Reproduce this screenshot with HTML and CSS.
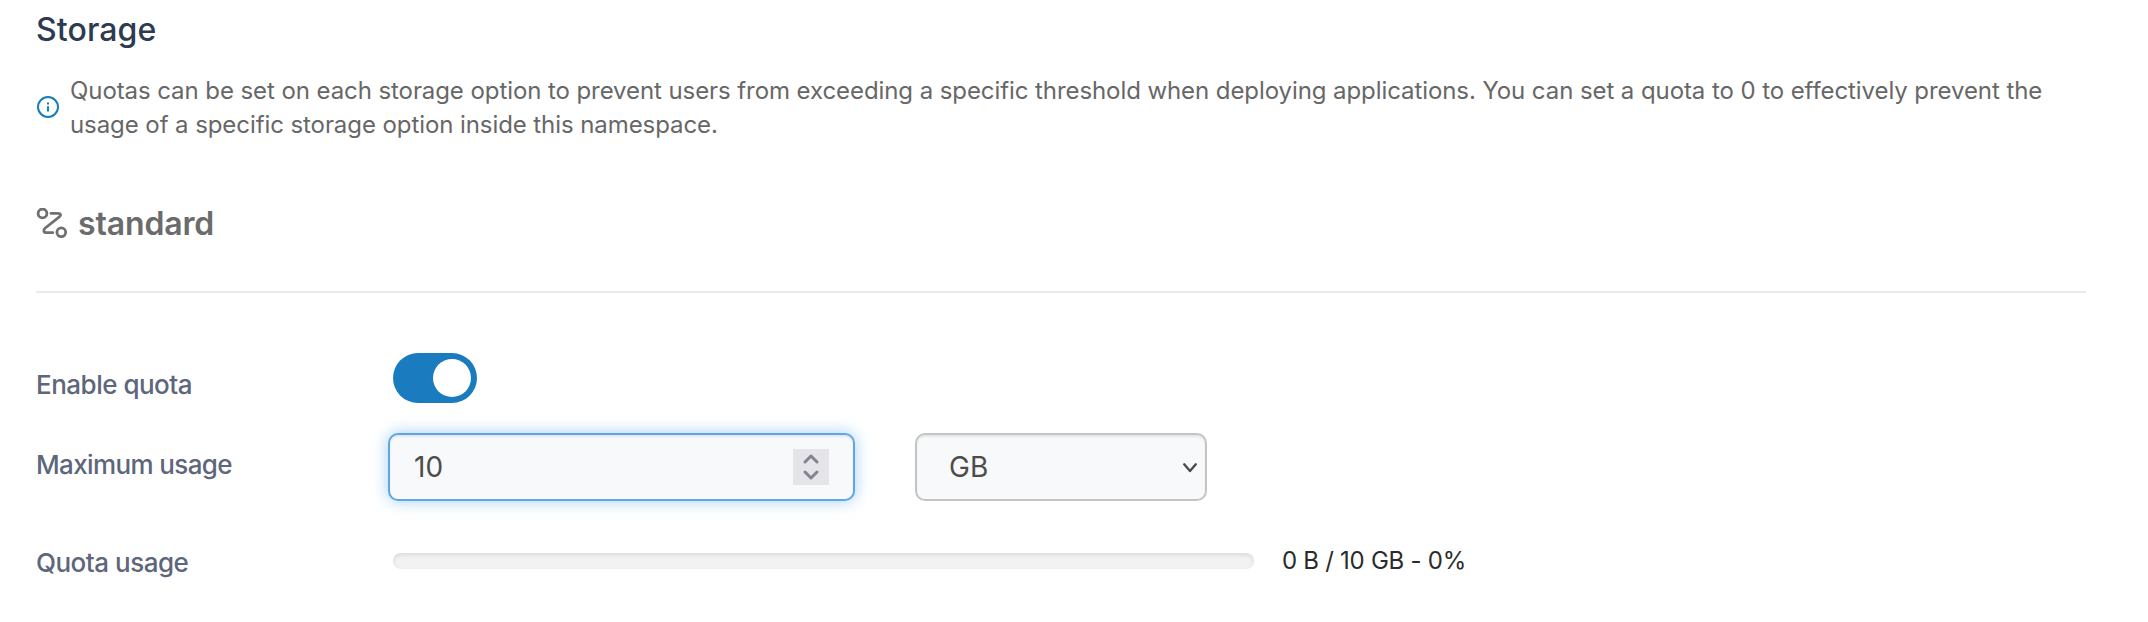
FILE: index.html
```html
<!DOCTYPE html>
<html lang="en">
<head>
<meta charset="utf-8">
<title>Storage</title>
<link rel="stylesheet" href="styles.css">
</head>
<body>
<main class="page">
  <h2 class="title">Storage</h2>
  <div class="tip">
    <svg class="tip-icon" viewBox="0 0 24 24" width="24" height="24"><circle cx="12" cy="12" r="10"/><path d="M12 11.200v5.200M12 7.400v2"/></svg>
    <p class="tip-text">Quotas can be set on each storage option to prevent users from exceeding a specific threshold when deploying applications. You can set a quota to 0 to effectively prevent the usage of a specific storage option inside this namespace.</p>
  </div>
  <h3 class="storage-class">
    <svg class="route-icon" viewBox="0 0 32 32" width="32" height="32"><circle cx="6.500" cy="5.500" r="4.400"/><circle cx="25.300" cy="24.300" r="4.400"/><path d="M15 5.300h7c3 0 3.300 2 1.300 3.500l-14 11.200c-2.200 1.900-2 4.700 1 4.700h6.500"/></svg>
    <span class="class-name">standard</span>
  </h3>
  <form class="quota">
    <div class="row row-enable">
      <span class="label">Enable quota</span>
      <span class="switch" role="switch" aria-checked="true"><span class="knob"></span></span>
    </div>
    <div class="row row-max">
      <span class="label">Maximum usage</span>
      <div class="field number"><span class="value">10</span>
        <span class="spinner"><svg viewBox="0 0 36 36" width="36" height="36"><path d="M12 13l6-6 6 6M12 23l6 6 6-6"/></svg></span>
      </div>
      <div class="field unit"><span class="value">GB</span>
        <svg class="chevron" viewBox="0 0 16 12" width="16" height="12"><path d="M2.200 2.300l5.800 6.700 5.800-6.700"/></svg>
      </div>
    </div>
    <div class="row row-usage">
      <span class="label">Quota usage</span>
      <div class="progress"></div>
      <span class="usage">0 B / 10 GB - 0%</span>
    </div>
  </form>
</main>
</body>
</html>
```
FILE: styles.css
```css
* { box-sizing: border-box; }
body { margin: 0; background: #fff; font-family: Inter, sans-serif; }
.page { padding: 10px 62px 0 36px; }
.title { margin: 0; font-size: 32px; line-height: 40px; font-weight: 550; letter-spacing: .1px; color: #2d3a50; }
.tip { display: flex; align-items: center; gap: 10px; margin-top: 23px; }
.tip-icon { flex: none; margin-bottom: 1px; fill: none; stroke: #1a7bbf; stroke-width: 2; }
.tip-text { margin: 0; padding-top: 1px; font-size: 24px; line-height: 34px; letter-spacing: -.08px; color: #676767; }
.storage-class { display: flex; align-items: center; gap: 10px; margin: 0; height: 151px; padding-top: 14px; border-bottom: 2px solid #ebebeb; color: #6b6b6b; font-size: 32px; font-weight: 600; line-height: 40px; letter-spacing: -.15px; }
.route-icon { flex: none; fill: none; stroke: #707070; stroke-width: 2.8; stroke-linecap: round; }
.quota { display: flex; flex-direction: column; }
.row { display: flex; }
.label { width: 357px; font-size: 26px; line-height: 32px; font-weight: 550; letter-spacing: -.5px; color: #5d667b; }
.row-enable { height: 80px; margin-top: 60px; }
.row-enable .label { padding-top: 16px; }
.switch { display: flex; justify-content: flex-end; width: 84px; height: 50px; padding: 6px; border-radius: 25px; background: #1a7bbf; }
.knob { width: 38px; height: 38px; border-radius: 50%; background: #fff; }
.row-max .label { width: 352px; padding-top: 16px; letter-spacing: -.62px; }
.field { display: flex; align-items: center; justify-content: space-between; height: 68px; border: 2px solid #c4c4c4; border-radius: 10px; background: #f8f9fb; box-shadow: inset 0 2px 2px rgba(0,0,0,.075); font-size: 28px; color: #4c4c4c; }
.number { width: 467px; padding: 0 24px; border-color: #5ea6e4; box-shadow: inset 0 2px 2px rgba(0,0,0,.075), 0 0 16px rgba(102,175,233,.6); }
.spinner { display: flex; background: #e5e4e9; }
.spinner svg { fill: none; stroke: #85838f; stroke-width: 3; stroke-linecap: round; stroke-linejoin: round; }
.unit { width: 292px; margin-left: 60px; padding: 0 7px 0 32px; }
.chevron { margin-top: 2px; fill: none; stroke: #4c4c4c; stroke-width: 2.4; stroke-linecap: round; stroke-linejoin: round; }
.row-usage { margin-top: 45px; }
.row-usage .label { padding-top: 1px; }
.progress { width: 861px; height: 16px; margin-top: 7px; border-radius: 8px; background: #f2f2f2; box-shadow: inset 0 2px 4px rgba(0,0,0,.1); }
.usage { margin-left: 28px; font-size: 24px; line-height: 30px; letter-spacing: -.27px; color: #2b2b2b; }
```
